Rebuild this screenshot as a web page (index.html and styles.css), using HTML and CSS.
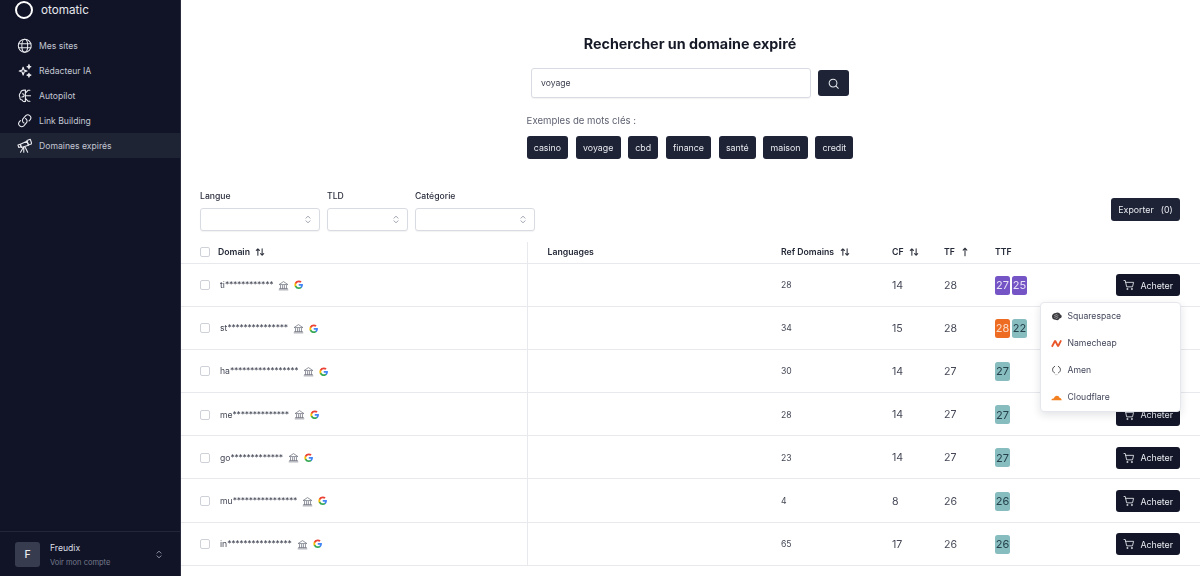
FILE: index.html
```html
<!DOCTYPE html>
<html lang="fr">
<head>
<meta charset="utf-8">
<title>Domaines expirés</title>
<link rel="stylesheet" href="styles.css">
</head>
<body>
<svg class="defs" width="0" height="0" aria-hidden="true">
  <symbol id="i-cart" viewBox="0 0 24 24"><g fill="none" stroke="currentColor" stroke-width="1.700" stroke-linecap="round" stroke-linejoin="round"><path d="M2 3h2.500l2.800 12.700h11.700l2.200-9H5.300"/><circle cx="8.500" cy="20" r="1"/><circle cx="17.500" cy="20" r="1"/></g></symbol>
  <symbol id="i-bank" viewBox="0 0 24 24"><g fill="none" stroke="currentColor" stroke-width="1.600" stroke-linecap="round" stroke-linejoin="round"><path d="M3 9.500 12 3.500l9 6zM5.500 12v6M10 12v6M14 12v6M18.500 12v6M3.500 18.500h17M2.500 21.500h19"/></g></symbol>
  <symbol id="i-g" viewBox="0 0 24 24"><path fill="#4285F4" d="M22.560 12.250c0-.780-.070-1.530-.200-2.250H12v4.260h5.920a5.060 5.060 0 0 1-2.200 3.320v2.770h3.570c2.080-1.920 3.270-4.740 3.270-8.100z"/><path fill="#34A853" d="M12 23c2.970 0 5.460-.980 7.280-2.660l-3.570-2.770c-.980.660-2.230 1.060-3.710 1.060-2.860 0-5.290-1.930-6.160-4.530H2.180v2.840A11 11 0 0 0 12 23z"/><path fill="#FBBC05" d="M5.840 14.090a6.600 6.600 0 0 1 0-4.180V7.070H2.180a11 11 0 0 0 0 9.860z"/><path fill="#EA4335" d="M12 5.380c1.620 0 3.060.560 4.210 1.640l3.150-3.150C17.450 2.090 14.970 1 12 1A11 11 0 0 0 2.180 7.070l3.660 2.840C6.710 7.310 9.140 5.380 12 5.380z"/></symbol>
  <symbol id="i-sort" viewBox="0 0 14 12"><g fill="none" stroke="currentColor" stroke-width="1.500" stroke-linecap="round" stroke-linejoin="round"><path d="M4 10.500v-9M1.800 3.700 4 1.500l2.200 2.200M10 1.500v9M7.800 8.300l2.200 2.200 2.200-2.200"/></g></symbol>
  <symbol id="i-updown" viewBox="0 0 12 16"><g fill="none" stroke="currentColor" stroke-width="1.300" stroke-linecap="round" stroke-linejoin="round"><path d="M3 6 6 3l3 3M3 10l3 3 3-3"/></g></symbol>
</svg>

<div class="app">
  <aside class="sidebar">
    <div class="brand"><span class="ring"></span><span class="brand-name">otomatic</span></div>
    <nav class="nav">
      <a class="nav-item">
        <svg class="nav-icon" viewBox="0 0 24 24"><g fill="none" stroke="currentColor" stroke-width="1.600" stroke-linecap="round"><circle cx="12" cy="12" r="10"/><ellipse cx="12" cy="12" rx="4.500" ry="10"/><path d="M2.500 9h19M2.500 15h19"/></g></svg>
        <span>Mes sites</span>
      </a>
      <a class="nav-item">
        <svg class="nav-icon" viewBox="0 0 24 24"><g fill="none" stroke="currentColor" stroke-width="1.800" stroke-linejoin="round"><path d="M9.500 6.500 11 11l4.500 1.500L11 14l-1.500 4.500L8 14l-4.500-1.500L8 11z"/><path d="M18.500 2.500 19.200 5l2.300.7-2.300.8-.7 2.500-.7-2.500-2.300-.8 2.300-.7z" fill="currentColor"/><path d="M18.500 16 19.200 18l2.300.7-2.300.8-.7 2.500-.7-2.500-2.300-.8 2.300-.7z" fill="currentColor"/></g></svg>
        <span>Rédacteur IA</span>
      </a>
      <a class="nav-item">
        <svg class="nav-icon" viewBox="0 0 24 24"><g fill="none" stroke="currentColor" stroke-width="1.700" stroke-linecap="round" stroke-linejoin="round"><path d="M13 3.500C9 2.500 6 4.500 5.500 7.500 3.500 9 3 12 4.500 14c-.5 2.500 1 4.500 3.500 4.500.5 2 2.500 3 4.500 2.500"/><path d="M13 3v18M13 8l4-4.500h3M13 12h8M13 16l4 4.500h3M8.500 9c1.500 0 2.500 1 2.500 2.500M7.500 14c1.500 0 3-.5 3.500-2"/></g></svg>
        <span>Autopilot</span>
      </a>
      <a class="nav-item">
        <svg class="nav-icon" viewBox="0 0 24 24"><g fill="none" stroke="currentColor" stroke-width="1.700" stroke-linecap="round" stroke-linejoin="round"><path d="M13.200 8.500a4.500 4.500 0 0 1 1.300 6.900l-4 4.500a4.700 4.700 0 0 1-7-6.200l1.800-2"/><path d="M10.800 15.500a4.500 4.500 0 0 1-1.300-6.900l4-4.500a4.700 4.700 0 0 1 7 6.200l-1.800 2"/></g></svg>
        <span>Link Building</span>
      </a>
      <a class="nav-item active">
        <svg class="nav-icon" viewBox="0 0 24 24"><g fill="none" stroke="currentColor" stroke-width="1.700" stroke-linecap="round" stroke-linejoin="round"><path d="m1.500 11 3.500-1.200 1.300 3.600-3.500 1.300z"/><path d="m5.300 9.700 10-4.700 2.500 6.200-11 3.500z"/><path d="m15.500 4 5-2 2.500 7-5.200 2z"/><path d="m12.500 14 4 8M10.500 14.500V22M9.500 15 5.500 22"/></g></svg>
        <span>Domaines expirés</span>
      </a>
    </nav>
    <div class="account">
      <div class="avatar">F</div>
      <div class="account-text">
        <div class="account-name">Freudix</div>
        <div class="account-sub">Voir mon compte</div>
      </div>
      <svg class="account-caret"><use href="#i-updown"/></svg>
    </div>
  </aside>

  <main class="main">
    <section class="search">
      <h1 class="search-title">Rechercher un domaine expiré</h1>
      <div class="search-row">
        <input class="search-input" type="text" value="voyage">
        <button class="btn search-btn" aria-label="Rechercher">
          <svg width="11" height="11" viewBox="0 0 24 24"><g fill="none" stroke="currentColor" stroke-width="2.200" stroke-linecap="round"><circle cx="11" cy="11" r="8.500"/><path d="m17.500 17.500 5 5"/></g></svg>
        </button>
      </div>
      <div class="examples">
        <p class="examples-label">Exemples de mots clés :</p>
        <div class="chips">
          <button class="btn chip">casino</button>
          <button class="btn chip">voyage</button>
          <button class="btn chip">cbd</button>
          <button class="btn chip">finance</button>
          <button class="btn chip">santé</button>
          <button class="btn chip">maison</button>
          <button class="btn chip">credit</button>
        </div>
      </div>
    </section>

    <section class="filters">
      <label class="filter f-lang"><span class="filter-label">Langue</span><span class="select"><svg class="select-caret"><use href="#i-updown"/></svg></span></label>
      <label class="filter f-tld"><span class="filter-label">TLD</span><span class="select"><svg class="select-caret"><use href="#i-updown"/></svg></span></label>
      <label class="filter f-cat"><span class="filter-label">Catégorie</span><span class="select"><svg class="select-caret"><use href="#i-updown"/></svg></span></label>
      <button class="btn export-btn"><span>Exporter</span><span>(0)</span></button>
    </section>

    <table class="table">
      <colgroup>
        <col class="c-domain"><col class="c-lang"><col class="c-ref"><col class="c-cf"><col class="c-tf"><col class="c-ttf"><col>
      </colgroup>
      <thead>
        <tr>
          <th class="cell-domain"><span class="domain-wrap"><span class="check"></span><span class="th-label">Domain</span><svg class="sort"><use href="#i-sort"/></svg></span></th>
          <th class="cell-lang">Languages</th>
          <th><span class="th-label">Ref Domains</span><svg class="sort"><use href="#i-sort"/></svg></th>
          <th><span class="th-label">CF</span><svg class="sort"><use href="#i-sort"/></svg></th>
          <th><span class="th-label">TF</span><svg class="sort" viewBox="0 0 8 12"><path d="M4 10.500v-9M1.800 3.700 4 1.500l2.200 2.200" fill="none" stroke="currentColor" stroke-width="1.300" stroke-linecap="round" stroke-linejoin="round"/></svg></th>
          <th>TTF</th>
          <th></th>
        </tr>
      </thead>
      <tbody>
        <tr>
          <td class="cell-domain"><span class="domain-wrap"><span class="check"></span><span class="name">ti<span class="mask">************</span></span><svg class="bank"><use href="#i-bank"/></svg><svg class="g"><use href="#i-g"/></svg></span></td>
          <td class="cell-lang"></td><td>28</td><td class="num">14</td><td class="num">28</td>
          <td><span class="badges"><span class="badge purple">27</span><span class="badge purple">25</span></span></td>
          <td class="cell-buy"><button class="btn buy-btn"><svg class="cart"><use href="#i-cart"/></svg><span>Acheter</span></button></td>
        </tr>
        <tr>
          <td class="cell-domain"><span class="domain-wrap"><span class="check"></span><span class="name">st<span class="mask">***************</span></span><svg class="bank"><use href="#i-bank"/></svg><svg class="g"><use href="#i-g"/></svg></span></td>
          <td class="cell-lang"></td><td>34</td><td class="num">15</td><td class="num">28</td>
          <td><span class="badges"><span class="badge orange">28</span><span class="badge teal">22</span></span></td>
          <td class="cell-buy"><button class="btn buy-btn"><svg class="cart"><use href="#i-cart"/></svg><span>Acheter</span></button></td>
        </tr>
        <tr>
          <td class="cell-domain"><span class="domain-wrap"><span class="check"></span><span class="name">ha<span class="mask">*****************</span></span><svg class="bank"><use href="#i-bank"/></svg><svg class="g"><use href="#i-g"/></svg></span></td>
          <td class="cell-lang"></td><td>30</td><td class="num">14</td><td class="num">27</td>
          <td><span class="badges"><span class="badge teal">27</span></span></td>
          <td class="cell-buy"><button class="btn buy-btn"><svg class="cart"><use href="#i-cart"/></svg><span>Acheter</span></button></td>
        </tr>
        <tr>
          <td class="cell-domain"><span class="domain-wrap"><span class="check"></span><span class="name">me<span class="mask">**************</span></span><svg class="bank"><use href="#i-bank"/></svg><svg class="g"><use href="#i-g"/></svg></span></td>
          <td class="cell-lang"></td><td>28</td><td class="num">14</td><td class="num">27</td>
          <td><span class="badges"><span class="badge teal">27</span></span></td>
          <td class="cell-buy"><button class="btn buy-btn"><svg class="cart"><use href="#i-cart"/></svg><span>Acheter</span></button></td>
        </tr>
        <tr>
          <td class="cell-domain"><span class="domain-wrap"><span class="check"></span><span class="name">go<span class="mask">*************</span></span><svg class="bank"><use href="#i-bank"/></svg><svg class="g"><use href="#i-g"/></svg></span></td>
          <td class="cell-lang"></td><td>23</td><td class="num">14</td><td class="num">27</td>
          <td><span class="badges"><span class="badge teal">27</span></span></td>
          <td class="cell-buy"><button class="btn buy-btn"><svg class="cart"><use href="#i-cart"/></svg><span>Acheter</span></button></td>
        </tr>
        <tr>
          <td class="cell-domain"><span class="domain-wrap"><span class="check"></span><span class="name">mu<span class="mask">****************</span></span><svg class="bank"><use href="#i-bank"/></svg><svg class="g"><use href="#i-g"/></svg></span></td>
          <td class="cell-lang"></td><td>4</td><td class="num">8</td><td class="num">26</td>
          <td><span class="badges"><span class="badge teal">26</span></span></td>
          <td class="cell-buy"><button class="btn buy-btn"><svg class="cart"><use href="#i-cart"/></svg><span>Acheter</span></button></td>
        </tr>
        <tr>
          <td class="cell-domain"><span class="domain-wrap"><span class="check"></span><span class="name">in<span class="mask">****************</span></span><svg class="bank"><use href="#i-bank"/></svg><svg class="g"><use href="#i-g"/></svg></span></td>
          <td class="cell-lang"></td><td>65</td><td class="num">17</td><td class="num">26</td>
          <td><span class="badges"><span class="badge teal">26</span></span></td>
          <td class="cell-buy"><button class="btn buy-btn"><svg class="cart"><use href="#i-cart"/></svg><span>Acheter</span></button></td>
        </tr>
      </tbody>
    </table>

    <div class="menu">
      <div class="menu-item">
        <svg class="menu-icon" viewBox="0 0 24 24"><path fill="#3a3a3f" d="M2 11c1-4 5-6.500 8-6.500l4-1c3 0 5 2 6 3.500l3 3c1 2 0 4-1 5l-3 1c-1 2.500-3 4-5 4l-5-1c-3 0-5-1.500-6-3z"/><path d="M7 10l7-3M7 14l9-4M10 17l6-3" stroke="#fff" stroke-width="1" fill="none"/></svg>
        <span>Squarespace</span>
      </div>
      <div class="menu-item">
        <svg class="menu-icon" viewBox="0 0 24 24"><path d="M2 19 9 6l6.500 12L22 5" fill="none" stroke="#e8562a" stroke-width="4" stroke-linejoin="bevel"/></svg>
        <span>Namecheap</span>
      </div>
      <div class="menu-item">
        <svg class="menu-icon" viewBox="0 0 24 24"><g fill="none" stroke="#3f3f46" stroke-width="2" stroke-linecap="round"><path d="M8 3C4 5 3.500 8 3.500 10.500S4.500 15.500 7.500 17"/><path d="M16 3c4 2 4.500 5 4.500 7.500s-1 5-4 6.500"/></g><path d="M9 21h6" stroke="#9a9aa2" stroke-width="1.500" stroke-dasharray="1.500 1"/></svg>
        <span>Amen</span>
      </div>
      <div class="menu-item">
        <svg class="menu-icon" viewBox="0 0 24 24"><path fill="#f38020" d="M1 18c0-2.500 1.500-4 3.500-4 .5 0 .8 0 1.500.2C7 10.500 10 8 13 8c3 0 5 2 5.500 4.500 2.500 0 4.500 2 5 5.500z"/></svg>
        <span>Cloudflare</span>
      </div>
    </div>
  </main>
</div>
</body>
</html>
```

FILE: styles.css
```css
* { box-sizing: border-box; }
html, body { margin: 0; padding: 0; height: 576px; overflow: hidden; }
body { font-family: Inter, "Liberation Sans", sans-serif; font-size: 8.640px; color: #1d2230; background: #fff; }
.defs { position: absolute; }

.app { display: flex; height: 576px; }

/* Sidebar */
.sidebar { width: 181px; flex: none; background: #111427; display: flex; flex-direction: column; color: #c3c6d2; border-right: 1px solid #2a2d3d; }
.brand { display: flex; align-items: center; height: 20px; padding-left: 15px; gap: 8px; }
.ring { width: 18px; height: 18px; border: 2.500px solid #fff; border-radius: 50%; }
.brand-name { font-size: 11.700px; color: #e8e9ee; }
.nav { margin-top: 13px; display: flex; flex-direction: column; }
.nav-item { display: flex; align-items: center; height: 25px; padding-left: 16.500px; gap: 7px; font-size: 8.640px; }
.nav-item.active { background: #1f2435; }
.nav-icon { width: 15.500px; height: 15.500px; color: #e8e9ee; flex: none; }
.account { margin-top: auto; height: 45px; border-top: 1px solid #23263a; display: flex; align-items: center; padding: 0 17px 0 15px; }
.avatar { width: 25px; height: 25px; border-radius: 3px; background: #373c4e; color: #eceef2; display: flex; align-items: center; justify-content: center; font-size: 10.500px; font-weight: 500; }
.account-text { margin-left: 10px; flex: 1; padding-top: 2px; }
.account-name { color: #dcdee5; font-size: 8.640px; line-height: 12px; }
.account-sub { color: #777b8d; font-size: 7.500px; line-height: 11px; margin-top: 3px; }
.account-caret { width: 8px; height: 11px; color: #a8abb8; }

/* Main */
.main { flex: 1; position: relative; min-width: 0; will-change: transform; }
.btn { border: 0; background: #1e2336; color: #e9ebf0; font: inherit; font-size: 8.800px; border-radius: 3px; display: inline-flex; align-items: center; justify-content: center; padding: 0; }

.search { display: flex; flex-direction: column; align-items: center; padding-right: 1px; }
.search-title { margin: 35px 0 0; font-size: 14.300px; line-height: 18px; font-weight: 700; color: #161a27; }
.search-row { display: flex; align-items: center; gap: 7px; margin-top: 15px; }
.search-input { width: 280px; height: 30px; border: 1px solid #d9dbe2; border-radius: 3px; padding: 0 9px; font: inherit; color: #3d4150; outline: none; background: #fff; box-shadow: 0 1px 1px rgba(0,0,0,.05); }
.search-btn { width: 31px; height: 26px; }
.examples { margin-top: 16px; }
.examples-label { margin: 0; font-size: 9.600px; line-height: 14px; color: #5f6372; }
.chips { display: flex; gap: 7.600px; margin-top: 8px; }
.chip { height: 22.500px; padding: 0 7.200px; font-size: 8.800px; }

.filters { display: flex; align-items: flex-end; padding: 0 20px 0 19px; margin-top: 31px; gap: 7px; }
.filter { display: flex; flex-direction: column; }
.filter-label { font-size: 8.640px; line-height: 12px; font-weight: 500; color: #2a2e3c; margin-bottom: 6px; }
.f-lang { width: 120px; }
.f-tld { width: 81px; }
.f-cat { width: 120px; }
.select { height: 23px; border: 1px solid #d9dbe2; border-radius: 3px; background: #fff; display: flex; align-items: center; justify-content: flex-end; padding-right: 7px; box-shadow: 0 1px 1px rgba(0,0,0,.05); }
.select-caret { width: 8px; height: 11px; color: #8f93a1; }
.export-btn { margin-left: auto; width: 69px; height: 23px; gap: 7px; margin-bottom: 10px; }

/* Table */
.table { width: 100%; margin-top: 11px; border-collapse: separate; border-spacing: 0; table-layout: fixed; }
.c-domain { width: 346.500px; }
.c-lang { width: 253.500px; }
.c-ref { width: 111px; }
.c-cf { width: 52px; }
.c-tf { width: 51px; }
.c-ttf { width: 100px; }
th, td { padding: 0; text-align: left; border-bottom: 1px solid #e8e9ed; }
th { height: 22px; font-weight: 600; font-size: 8.700px; color: #252a38; }
td { height: 43.200px; color: #444856; padding-top: 1px; }
.cell-domain { padding-left: 19px; border-right: 1px solid #e8e9ed; }
.cell-lang { padding-left: 20px; }
.domain-wrap { display: flex; align-items: center; }
.check { width: 10px; height: 10px; border: 1px solid #cfd1d8; border-radius: 2px; background: #fff; flex: none; margin-right: 8px; }
td .check { margin-right: 10px; }
.sort { width: 10px; height: 10px; margin-left: 5.500px; vertical-align: -2px; color: #30343f; }
.name { font-size: 8.640px; color: #444856; }
.mask { letter-spacing: -.3px; }
.bank { width: 11px; height: 11px; margin-left: 5px; color: #6b6f7c; }
.g { width: 9.500px; height: 9.500px; margin-left: 5px; }
.num { font-size: 10.600px; }
.badges { display: flex; gap: 2px; }
.badge { width: 15px; height: 19px; border-radius: 2.500px; font-size: 11px; display: flex; align-items: center; justify-content: center; }
.purple { background: #7555c6; color: #e8e2f7; }
.orange { background: #ee6b22; color: #fbdcc8; }
.teal { background: #88bdc0; color: #25414a; }
.cell-buy { padding-right: 20px; text-align: right; }
.buy-btn { width: 64px; height: 22.500px; background: #131628; gap: 5.500px; vertical-align: middle; }
.cart { width: 12px; height: 12px; }
.menu { position: absolute; left: 858.500px; top: 301.500px; width: 141px; height: 110.500px; background: #fff; border: 1px solid #e6e7ec; border-radius: 4px; box-shadow: 0 3px 8px rgba(20,25,40,.12); display: flex; flex-direction: column; padding: 0; }
.menu-item { flex: 1; display: flex; align-items: center; padding-left: 10.500px; gap: 5.500px; color: #43475a; }
.menu-icon { width: 11px; height: 11px; flex: none; }
```
